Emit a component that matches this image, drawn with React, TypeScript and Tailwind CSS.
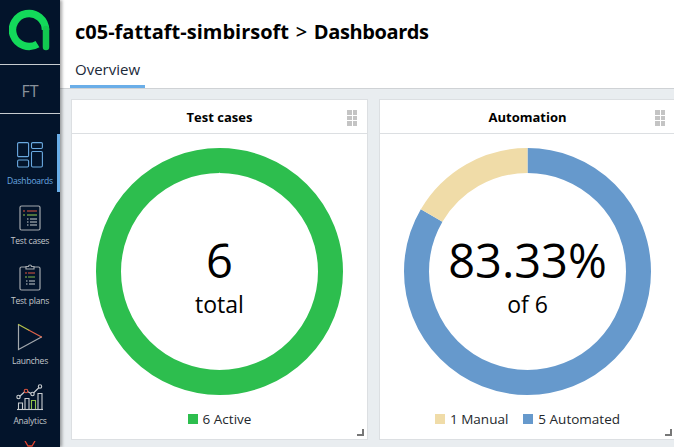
const font = { fontFamily: '"Open Sans", "Noto Sans", sans-serif' };

const DashboardsIcon = () => (
  <svg className="mb-[3px]" width="26" height="26" viewBox="0 0 26 26" fill="none" stroke="#6aa9e0" strokeWidth="1.1">
    <rect x="0.6" y="0.6" width="11" height="14" rx="1.2" />
    <rect x="0.6" y="18" width="11" height="7" rx="1.2" />
    <rect x="14.500" y="0.6" width="10.900" height="5.900" rx="1.2" />
    <rect x="14.500" y="9.500" width="10.900" height="15.500" rx="1.2" />
  </svg>
);

const TestCasesIcon = () => (
  <svg width="22" height="26" viewBox="0 0 22 26" fill="none">
    <rect x="1" y="1" width="20" height="24" rx="1.5" stroke="#a3a8ad" strokeWidth="1.2" />
    <path d="M4 6h2" stroke="#e0553f" strokeWidth="1.2" />
    <path d="M8 6h10" stroke="#b94a3c" strokeWidth="1.2" />
    <path d="M4 10h2" stroke="#8fc24a" strokeWidth="1.2" />
    <path d="M8 10h10" stroke="#7fb04a" strokeWidth="1.2" />
    <path d="M11 14h7M11 17h7M11 20h7" stroke="#c9cdd0" strokeWidth="1.1" />
    <path d="M8 14h1.5M8 17h1.5M8 20h1.5" stroke="#c9cdd0" strokeWidth="1.1" />
  </svg>
);

const TestPlansIcon = () => (
  <svg width="22" height="28" viewBox="0 0 22 28" fill="none">
    <path d="M7 4H2.500A1.500 1.500 0 0 0 1 5.500v20A1.500 1.500 0 0 0 2.500 27h17a1.500 1.500 0 0 0 1.500-1.500v-20A1.500 1.500 0 0 0 19.500 4H15" stroke="#a3a8ad" strokeWidth="1.2" />
    <path d="M7 6V3.500h2.500a1.500 1.500 0 0 1 3 0H15V6z" stroke="#a3a8ad" strokeWidth="1.2" />
    <path d="M6 10h2" stroke="#e0553f" strokeWidth="1.2" />
    <path d="M9 10h7" stroke="#b94a3c" strokeWidth="1.2" />
    <path d="M6 14h2" stroke="#8fc24a" strokeWidth="1.2" />
    <path d="M9 14h7" stroke="#6f9e45" strokeWidth="1.2" />
    <path d="M10 18h6M10 21h6M7 18h1.500M7 21h1.500" stroke="#c9cdd0" strokeWidth="1.1" />
  </svg>
);

const LaunchesIcon = () => (
  <svg width="26" height="28" viewBox="0 0 26 28" fill="none" strokeWidth="1.2" strokeLinecap="round">
    <path d="M1.500 1.500V26.500L24.500 14" stroke="#a3a8ad" />
    <path d="M1.500 1.500L12 7.300" stroke="#b5c24a" />
    <path d="M12 7.300L24.500 14" stroke="#e0644a" />
  </svg>
);

const AnalyticsIcon = () => (
  <svg width="28" height="28" viewBox="0 0 28 28" fill="none" strokeWidth="1.1">
    <path d="M3.500 13.500L9 8.500M11.500 8.500L15 10.500M17.500 10L23 4.500" stroke="#c9cdd0" />
    <circle cx="2.500" cy="14" r="1.700" stroke="#c9cdd0" />
    <circle cx="10" cy="8" r="1.800" stroke="#e0553f" />
    <circle cx="16.500" cy="11" r="1.700" stroke="#c9cdd0" />
    <circle cx="24" cy="3.500" r="1.700" stroke="#c9cdd0" />
    <path d="M1 26.500h26" stroke="#c9cdd0" />
    <path d="M2.500 26v-6h4v6M9 26V15.500h4V26M22 26V10.500h4V26" stroke="#c9cdd0" />
    <path d="M15.500 26v-8.500h4V26" stroke="#8fc24a" />
  </svg>
);

const navItems = [
  { label: "Dashboards", icon: <DashboardsIcon />, active: true },
  { label: "Test cases", icon: <TestCasesIcon />, active: false },
  { label: "Test plans", icon: <TestPlansIcon />, active: false },
  { label: "Launches", icon: <LaunchesIcon />, active: false },
  { label: "Analytics", icon: <AnalyticsIcon />, active: false },
];

const Sidebar = () => (
  <aside className="relative z-10 flex h-full w-[60px] shrink-0 flex-col bg-[#03142b] shadow-[2px_0_3px_rgba(0,0,0,0.35)]">
    <div className="flex h-[65px] items-center justify-center border-b border-[#c8ccd0] pb-[5px]">
      <svg width="42" height="42" viewBox="0 0 42 42" fill="none">
        <path d="M36.500 21a16.500 16.500 0 1 0-8 14.100" stroke="#13d95a" strokeWidth="7.500" />
        <path d="M37 20v18" stroke="#12c950" strokeWidth="6.500" strokeLinecap="round" />
      </svg>
    </div>
    <div className="flex h-[49px] items-center justify-center border-b border-[#c8ccd0] pt-[3px] text-[16px] text-[#8a929b]">FT</div>
    <nav className="flex flex-col pt-[20px]">
      {navItems.map((item) => (
        <div
          key={item.label}
          className={`relative flex h-[60px] flex-col items-center justify-end pb-[7px] ${item.active ? "text-[#6aa9e0]" : "text-[#c4c8cc]"}`}
        >
          {item.icon}
          <span className="mt-[3px] text-[8.5px] leading-[13px] tracking-[-0.2px]">{item.label}</span>
          {item.active && <span className="absolute top-0 right-0 h-[58px] w-[3px] bg-[#6aaee8]" />}
        </div>
      ))}
    </nav>
    <svg className="absolute bottom-0 left-[24px]" width="12" height="6" viewBox="0 0 12 6" fill="none">
      <path d="M1 0l3 5h4l3-5" stroke="#e0442f" strokeWidth="1.300" />
    </svg>
  </aside>
);

const DragHandle = () => (
  <div className="absolute top-[10px] right-[10px] grid grid-cols-2 gap-[1px]">
    {[0, 1, 2, 3, 4, 5].map((i) => (
      <span key={i} className="h-[4.500px] w-[4.500px] bg-[#c4c4c4]" />
    ))}
  </div>
);

const Donut = ({ parts }: { parts: { color: string; value: number }[] }) => {
  const r = 111;
  const circ = 2 * Math.PI * r;
  let offset = 0;
  return (
    <svg className="absolute inset-0" width="247" height="247" viewBox="0 0 247 247">
      {parts.map((p) => {
        const len = p.value * circ;
        const el = (
          <circle
            key={p.color}
            cx="123.500"
            cy="123.500"
            r={r}
            fill="none"
            stroke={p.color}
            strokeWidth="25"
            strokeDasharray={`${len} ${circ - len}`}
            strokeDashoffset={-offset}
            transform="rotate(-90 123.500 123.500)"
          />
        );
        offset += len;
        return el;
      })}
    </svg>
  );
};

type CardProps = {
  title: string;
  big: string;
  small: string;
  parts: { color: string; value: number }[];
  legend: { color: string; label: string }[];
};

const Card = ({ title, big, small, parts, legend }: CardProps) => (
  <section className="relative flex h-[341px] w-[297px] shrink-0 flex-col border border-[#dcdfe2] bg-white">
    <header className="flex h-[34px] shrink-0 items-center justify-center border-b border-[#dcdfe2] pt-[2px] text-[13px] font-bold text-black">
      {title}
    </header>
    <DragHandle />
    <div className="flex justify-center pt-[14px]">
      <div className="relative h-[247px] w-[247px]">
        <Donut parts={parts} />
        <div className="absolute inset-0 flex flex-col items-center justify-center pt-[7px] text-black">
          <span className="text-[47px] leading-[58px]">{big}</span>
          <span className="text-[23px] leading-[30px]">{small}</span>
        </div>
      </div>
    </div>
    <div className="mt-[14px] flex items-center justify-center gap-[15px] text-[13.5px] leading-[20px] text-[#24282c]">
      {legend.map((l) => (
        <span key={l.label} className="flex items-center gap-[5px]">
          <span className="h-[10px] w-[10px]" style={{ backgroundColor: l.color }} />
          {l.label}
        </span>
      ))}
    </div>
    <span className="absolute right-[3px] bottom-[3px] h-[7px] w-[7px] border-r-2 border-b-2 border-[#777]" />
  </section>
);

export default function App() {
  return (
    <div className="flex h-[447px] w-[674px] overflow-hidden bg-[#e9edf0]" style={font}>
      <Sidebar />
      <main className="flex min-w-0 flex-1 flex-col">
        <div className="h-[89px] shrink-0 border-b border-[#cfd2d5] bg-white pl-[10px]">
          <h1 className="pt-[17px] pl-[5px] text-[20px] leading-[30px] font-bold text-black">
            c05-fattaft-simbirsoft <span className="mx-[1.500px] font-semibold">&gt;</span>{" "}
            <span className="tracking-[-0.4px]">Dashboards</span>
          </h1>
          <div className="mt-[9px] inline-block h-[32px] border-b-[3px] border-[#6aaee8] px-[5px] text-[15px] leading-[27px] text-[#1c2a3a]">
            Overview
          </div>
        </div>
        <div className="flex gap-[11px] pt-[10px] pl-[11px]">
          <Card
            title="Test cases"
            big="6"
            small="total"
            parts={[{ color: "#2dbe4e", value: 1 }]}
            legend={[{ color: "#2dbe4e", label: "6 Active" }]}
          />
          <Card
            title="Automation"
            big="83.33%"
            small="of 6"
            parts={[
              { color: "#6699cc", value: 5 / 6 },
              { color: "#f0dca8", value: 1 / 6 },
            ]}
            legend={[
              { color: "#f0dca8", label: "1 Manual" },
              { color: "#6699cc", label: "5 Automated" },
            ]}
          />
        </div>
      </main>
    </div>
  );
}
